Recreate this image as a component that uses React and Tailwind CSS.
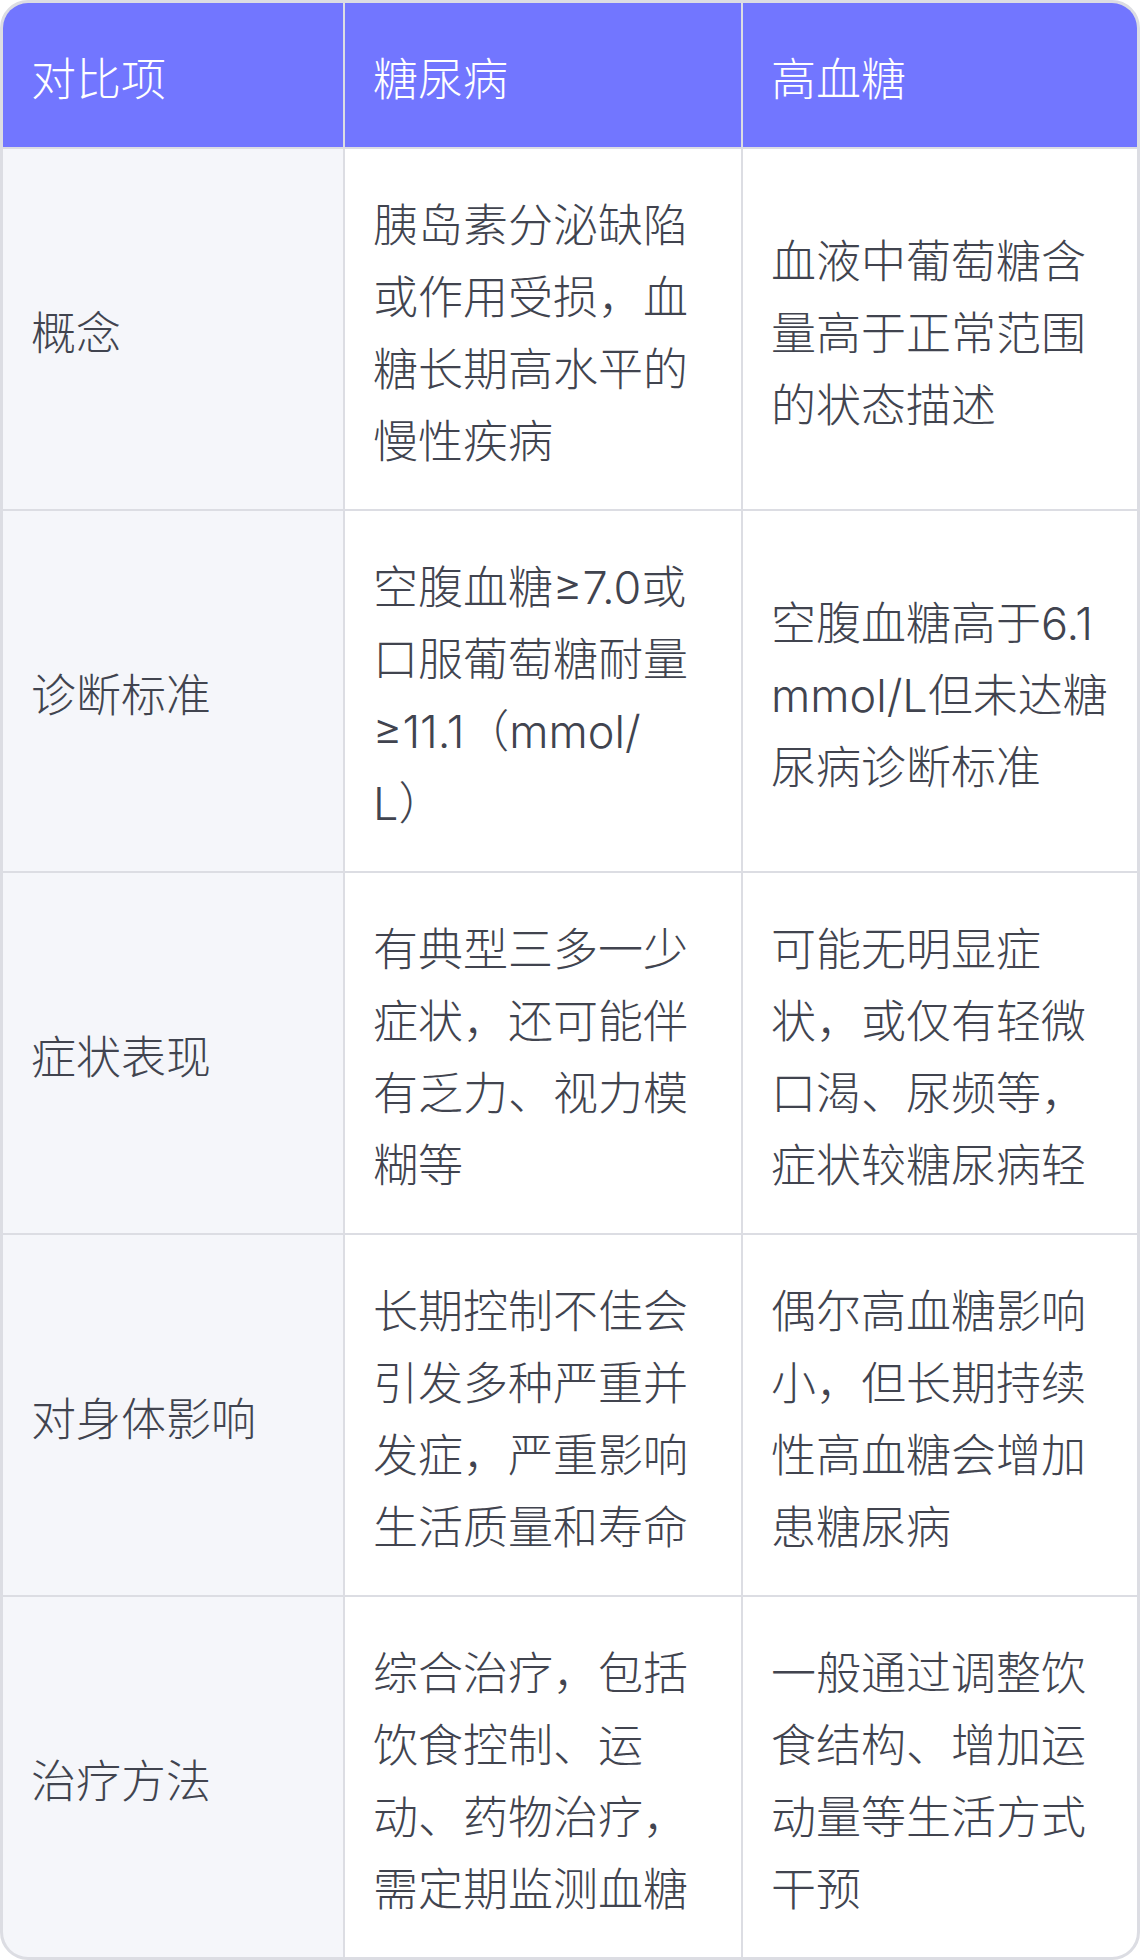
const rows = [
  {
    label: '概念',
    a: '胰岛素分泌缺陷或作用受损，血糖长期高水平的慢性疾病',
    b: '血液中葡萄糖含量高于正常范围的状态描述',
  },
  {
    label: '诊断标准',
    a: <>空腹血糖≥7.0或口服葡萄糖耐量≥11.1（mmol/<br />L）</>,
    b: <>空腹血糖高于6.1<br />mmol/L但未达糖尿病诊断标准</>,
  },
  {
    label: '症状表现',
    a: '有典型三多一少症状，还可能伴有乏力、视力模糊等',
    b: '可能无明显症状，或仅有轻微口渴、尿频等，症状较糖尿病轻',
  },
  {
    label: '对身体影响',
    a: '长期控制不佳会引发多种严重并发症，严重影响生活质量和寿命',
    b: '偶尔高血糖影响小，但长期持续性高血糖会增加患糖尿病',
  },
  {
    label: '治疗方法',
    a: '综合治疗，包括饮食控制、运动、药物治疗，需定期监测血糖',
    b: '一般通过调整饮食结构、增加运动量等生活方式干预',
  },
]

const font = { fontFamily: 'Inter, "Noto Sans CJK SC", sans-serif' }

function Cell({ children, className = '' }) {
  return (
    <div className={`flex items-center px-7 pt-[41px] pb-[31px] text-[45px] leading-[72px] font-light ${className}`}>
      <div className="min-w-0 break-words">{children}</div>
    </div>
  )
}

export default function App() {
  return (
    <div className="w-[1140px] bg-white" style={font}>
      <div className="border-[3px] border-[#dcdde3] rounded-[28px] overflow-hidden bg-[#dcdde3]">
        <div className="grid grid-cols-[340px_396px_394px] gap-[2px]">
          <Cell className="bg-[#7276ff] text-white">对比项</Cell>
          <Cell className="bg-[#7276ff] text-white">糖尿病</Cell>
          <Cell className="bg-[#7276ff] text-white">高血糖</Cell>
          {rows.map(r => (
            <div key={r.label} className="contents">
              <Cell className="bg-[#f5f6fa] text-[#41444f]">{r.label}</Cell>
              <Cell className="bg-white text-[#41444f]">{r.a}</Cell>
              <Cell className="bg-white text-[#41444f]">{r.b}</Cell>
            </div>
          ))}
        </div>
      </div>
    </div>
  )
}
